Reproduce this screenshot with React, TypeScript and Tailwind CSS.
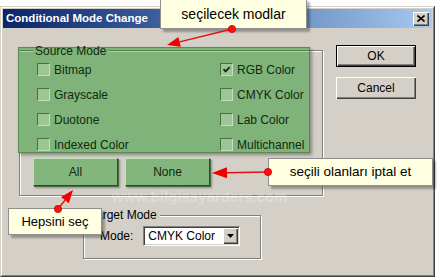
import React from 'react';

type Pt = [number, number];

// red annotation arrow: dot at "from", filled head at "to"
function Arrow({ from, to, head = 13, half = 5 }: { from: Pt; to: Pt; head?: number; half?: number }) {
  const dx = to[0] - from[0];
  const dy = to[1] - from[1];
  const len = Math.hypot(dx, dy);
  const ux = dx / len;
  const uy = dy / len;
  const bx = to[0] - ux * head;
  const by = to[1] - uy * head;
  const pts = `${to[0]},${to[1]} ${bx - uy * half},${by + ux * half} ${bx + uy * half},${by - ux * half}`;
  return (
    <g>
      <line x1={from[0]} y1={from[1]} x2={bx} y2={by} stroke="#e01010" strokeWidth="1.4" />
      <polygon points={pts} fill="#ee0000" />
      <circle cx={from[0]} cy={from[1]} r="3.6" fill="#ff1010" stroke="#c00000" strokeWidth="0.8" />
    </g>
  );
}

function Check({ label, checked }: { label: string; checked?: boolean }) {
  return (
    <div className="flex h-[25px] items-center gap-[4px]">
      <span className="flex h-[13px] w-[13px] items-center justify-center border border-t-[#4a6e46] border-l-[#4a6e46] border-b-[#c2e0bb] border-r-[#c2e0bb] bg-[#9cc794]">
        {checked && (
          <svg width="9" height="9" viewBox="0 0 9 9">
            <path d="M1.5 4.2 L3.6 6.4 L7.6 2.2" stroke="#0f240f" strokeWidth="1.7" fill="none" />
          </svg>
        )}
      </span>
      <span>{label}</span>
    </div>
  );
}

function GreenButton({ children }: { children: React.ReactNode }) {
  return (
    <div className="flex h-[28px] w-[85px] items-center justify-center border border-t-[#c0e3b8] border-l-[#c0e3b8] border-b-[#2e4a2c] border-r-[#2e4a2c] bg-[#82b67d] text-[#10290f] shadow-[1px_1px_0_#4b6e48,2px_2px_2px_rgba(0,0,0,0.35)]">
      {children}
    </div>
  );
}

function Callout({ className, children }: { className: string; children: React.ReactNode }) {
  return (
    <div
      className={`absolute flex items-center justify-center border border-[#8e8e8e] bg-[#ffffe1] text-black shadow-[3px_3px_2px_rgba(0,0,0,0.3)] ${className}`}
    >
      {children}
    </div>
  );
}

export default function App() {
  return (
    <div className="relative h-[278px] w-[437px] overflow-hidden bg-white pt-[6px] font-['Liberation_Sans',Arial,sans-serif] text-[12px] text-black">
      <div className="h-[271px] w-[435px] border border-t-[#d4d0c8] border-l-[#d4d0c8] border-b-[#404040] border-r-[#404040] bg-[#d4d0c8]">
        <div className="flex h-full flex-col border border-t-white border-l-white border-b-[#808080] border-r-[#808080] p-px">
          {/* title bar */}
          <div className="flex h-[19px] items-center justify-between bg-linear-to-r from-[#0a246a] to-[#a6caf0] pl-[3px] pr-[3px]">
            <span className="text-[11.5px] font-bold text-white">Conditional Mode Change</span>
            <div className="flex h-[14px] w-[16px] items-center justify-center bg-[#d4d0c8] shadow-[inset_1px_1px_0_#fff,inset_-1px_-1px_0_#404040,inset_-2px_-2px_0_#808080]">
              <svg width="8" height="7" viewBox="0 0 8 7">
                <path d="M0.5 0.5 L7.5 6.5 M7.5 0.5 L0.5 6.5" stroke="#000" strokeWidth="1.6" />
              </svg>
            </div>
          </div>

          <div className="flex flex-1">
            <div className="pl-[16px] pt-[22px]">
              {/* Source Mode group */}
              <div className="h-[146px] w-[304px] border border-[#808080] shadow-[inset_1px_1px_0_#fff,1px_1px_0_#fff]">
                <div className="-ml-[2px] -mt-[4px] h-[106px] w-[292px] border border-[#5a8a55] bg-[#7fb37a] text-[#10290f] shadow-[2px_2px_3px_rgba(0,0,0,0.35)]">
                  <div className="flex h-[9px] items-start">
                    <span className="mt-[2px] h-[2px] w-[14px] border-t border-t-[#55834f] border-b border-b-[#a9d3a1]" />
                    <span className="-mt-[3px] px-[2px] leading-[12px]">Source Mode</span>
                    <span className="mt-[2px] h-[2px] flex-1 border-t border-t-[#55834f] border-b border-b-[#a9d3a1]" />
                  </div>
                  <div className="grid grid-cols-[183px_1fr] pl-[18px]">
                    <Check label="Bitmap" />
                    <Check label="RGB Color" checked />
                    <Check label="Grayscale" />
                    <Check label="CMYK Color" />
                    <Check label="Duotone" />
                    <Check label="Lab Color" />
                    <Check label="Indexed Color" />
                    <Check label="Multichannel" />
                  </div>
                </div>
                <div className="ml-[13px] mt-[5px] flex gap-[7px]">
                  <GreenButton>All</GreenButton>
                  <GreenButton>None</GreenButton>
                </div>
              </div>

              {/* Target Mode group */}
              <div className="relative ml-[64px] mt-[19px] h-[44px] w-[178px] border border-[#808080] shadow-[inset_1px_1px_0_#fff,1px_1px_0_#fff]">
                <span className="absolute -top-[8px] left-[3px] bg-[#d4d0c8] px-[3px] leading-[14px]">Target Mode</span>
                <div className="flex items-center gap-[10px] pl-[16px] pt-[10px]">
                  <span>Mode:</span>
                  <div className="flex h-[20px] w-[97px] items-center border border-t-[#808080] border-l-[#808080] border-b-white border-r-white bg-white p-px shadow-[inset_1px_1px_0_#404040,inset_-1px_-1px_0_#d4d0c8]">
                    <span className="flex-1 pl-[3px]">CMYK Color</span>
                    <div className="flex h-[16px] w-[15px] items-center justify-center bg-[#d4d0c8] shadow-[inset_1px_1px_0_#fff,inset_-1px_-1px_0_#404040,inset_-2px_-2px_0_#808080]">
                      <svg width="7" height="4" viewBox="0 0 7 4">
                        <polygon points="0,0 7,0 3.5,4" fill="#000" />
                      </svg>
                    </div>
                  </div>
                </div>
              </div>
            </div>

            {/* OK / Cancel */}
            <div className="ml-[13px] flex flex-col gap-[10px] pt-[17px]">
              <div className="flex h-[22px] w-[80px] items-center justify-center border border-black bg-[#d4d0c8] shadow-[inset_1px_1px_0_#fff,inset_-1px_-1px_0_#404040,inset_-2px_-2px_0_#808080]">
                OK
              </div>
              <div className="flex h-[22px] w-[80px] items-center justify-center bg-[#d4d0c8] shadow-[inset_1px_1px_0_#fff,inset_-1px_-1px_0_#404040,inset_-2px_-2px_0_#808080]">
                Cancel
              </div>
            </div>
          </div>
        </div>
      </div>

      {/* watermark */}
      <span className="absolute left-[112px] top-[189px] text-[15px] font-bold leading-[16px] text-white/25">www.bilgisayarders.com</span>

      {/* annotations */}
      <Callout className="left-[160px] top-[-1px] h-[30px] w-[147px] text-[14px]">seçilecek modlar</Callout>
      <Callout className="left-[8px] top-[208px] h-[27px] w-[94px] text-[13px]">Hepsini seç</Callout>
      <Callout className="left-[268px] top-[158px] h-[28px] w-[165px] text-[13.5px]">seçili olanları iptal et</Callout>
      <svg className="pointer-events-none absolute left-0 top-0" width="437" height="278" viewBox="0 0 437 278">
        <Arrow from={[232, 29]} to={[167, 45]} />
        <Arrow from={[58, 209]} to={[73, 190]} />
        <Arrow from={[268, 172]} to={[212, 173]} head={15} half={5.5} />
      </svg>
    </div>
  );
}
